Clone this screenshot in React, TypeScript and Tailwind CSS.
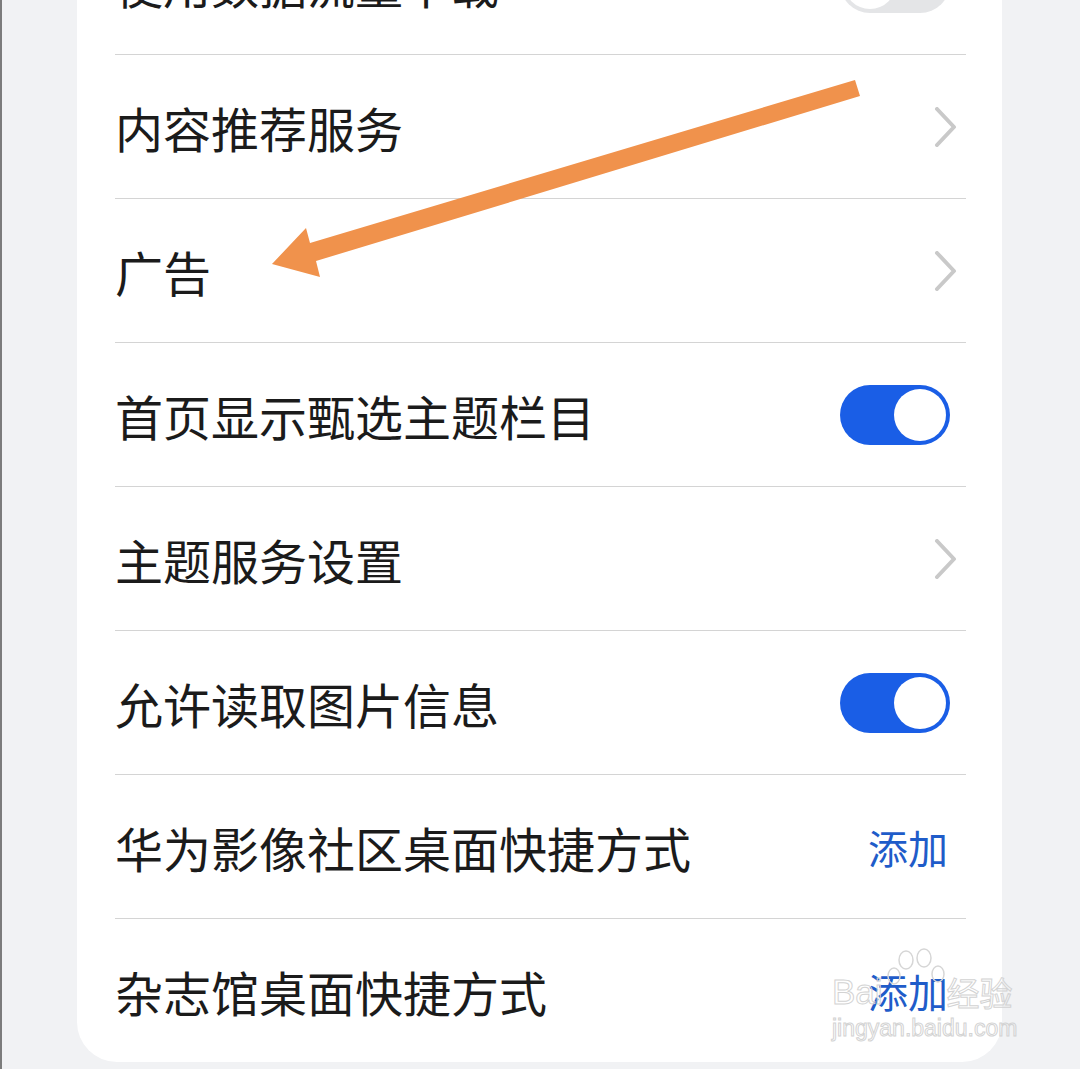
import { ReactNode } from "react";

type RowProps = {
  label: string;
  first?: boolean;
  right?: ReactNode;
};

function Toggle({ on }: { on: boolean }) {
  return (
    <div
      className={
        on
          ? "flex h-[60px] w-[110px] items-center justify-end rounded-full bg-[#1a5ee6] px-[4px]"
          : "flex h-[60px] w-[110px] items-center justify-start rounded-full bg-[#e4e5e7] px-[4px]"
      }
    >
      <div className="h-[52px] w-[52px] rounded-full bg-white" />
    </div>
  );
}

function Chevron() {
  return (
    <svg width="24" height="40" viewBox="0 0 24 40" className="mr-[-8px]">
      <polyline
        points="3,2 20,20 3,38"
        fill="none"
        stroke="#c9c9c9"
        strokeWidth="4"
        strokeLinecap="round"
        strokeLinejoin="round"
      />
    </svg>
  );
}

function AddLink() {
  return <span className="mr-[2px] text-[40px] text-[#1f5cc9]">添加</span>;
}

function Row({ label, first, right }: RowProps) {
  return (
    <div
      className={
        first
          ? "flex h-[143px] items-center justify-between"
          : "flex h-[144px] items-center justify-between border-t border-[#d4d4d4]"
      }
    >
      <span className="text-[48px] leading-none text-[#1b1b1b]">{label}</span>
      <div className="flex items-center pr-[16px]">{right}</div>
    </div>
  );
}

function Watermark() {
  return (
    <div className="pointer-events-none absolute left-[830px] top-[974px] flex flex-col items-start">
      <div className="relative flex items-end">
        <span className="text-[35px] leading-none text-transparent [-webkit-text-stroke:1px_#d3d3d3] [font-family:'Liberation_Sans',sans-serif]">
          Bai
        </span>
        <svg width="70" height="50" viewBox="0 0 70 50" className="absolute left-[52px] top-[-28px]">
          <ellipse cx="22" cy="14" rx="7" ry="9" fill="none" stroke="#d6d6d6" strokeWidth="1.5" />
          <ellipse cx="40" cy="12" rx="7" ry="9" fill="none" stroke="#d6d6d6" strokeWidth="1.5" />
          <ellipse cx="10" cy="30" rx="6" ry="8" fill="none" stroke="#d6d6d6" strokeWidth="1.5" />
          <ellipse cx="54" cy="28" rx="6" ry="8" fill="none" stroke="#d6d6d6" strokeWidth="1.5" />
        </svg>
        <span className="ml-[64px] text-[33px] leading-none text-transparent [-webkit-text-stroke:1px_#d3d3d3]">
          经验
        </span>
      </div>
      <span className="mt-[8px] text-[23px] leading-none text-transparent [-webkit-text-stroke:1px_#d3d3d3] [font-family:'Liberation_Sans',sans-serif]">
        jingyan.baidu.com
      </span>
    </div>
  );
}

function App() {
  return (
    <div
      className="relative h-[1069px] w-[1080px] overflow-hidden border-l-2 border-[#7c7c7c] bg-[#f1f2f4]"
      style={{ fontFamily: "'Noto Sans CJK SC', 'Noto Sans', sans-serif" }}
    >
      <div className="-mt-[89px] ml-[75px] w-[925px] rounded-b-[40px] bg-white pl-[38px] pr-[36px]">
        <Row first label="使用数据流量下载" right={<Toggle on={false} />} />
        <Row label="内容推荐服务" right={<Chevron />} />
        <Row label="广告" right={<Chevron />} />
        <Row label="首页显示甄选主题栏目" right={<Toggle on />} />
        <Row label="主题服务设置" right={<Chevron />} />
        <Row label="允许读取图片信息" right={<Toggle on />} />
        <Row label="华为影像社区桌面快捷方式" right={<AddLink />} />
        <Row label="杂志馆桌面快捷方式" right={<AddLink />} />
      </div>

      <svg width="1080" height="1069" className="pointer-events-none absolute left-[-2px] top-0">
        <polygon
          points="272,264 306,228 310,243 855,80 860,96 316,261 320,277"
          fill="#f0924c"
        />
      </svg>

      <Watermark />
    </div>
  );
}

export default App;
